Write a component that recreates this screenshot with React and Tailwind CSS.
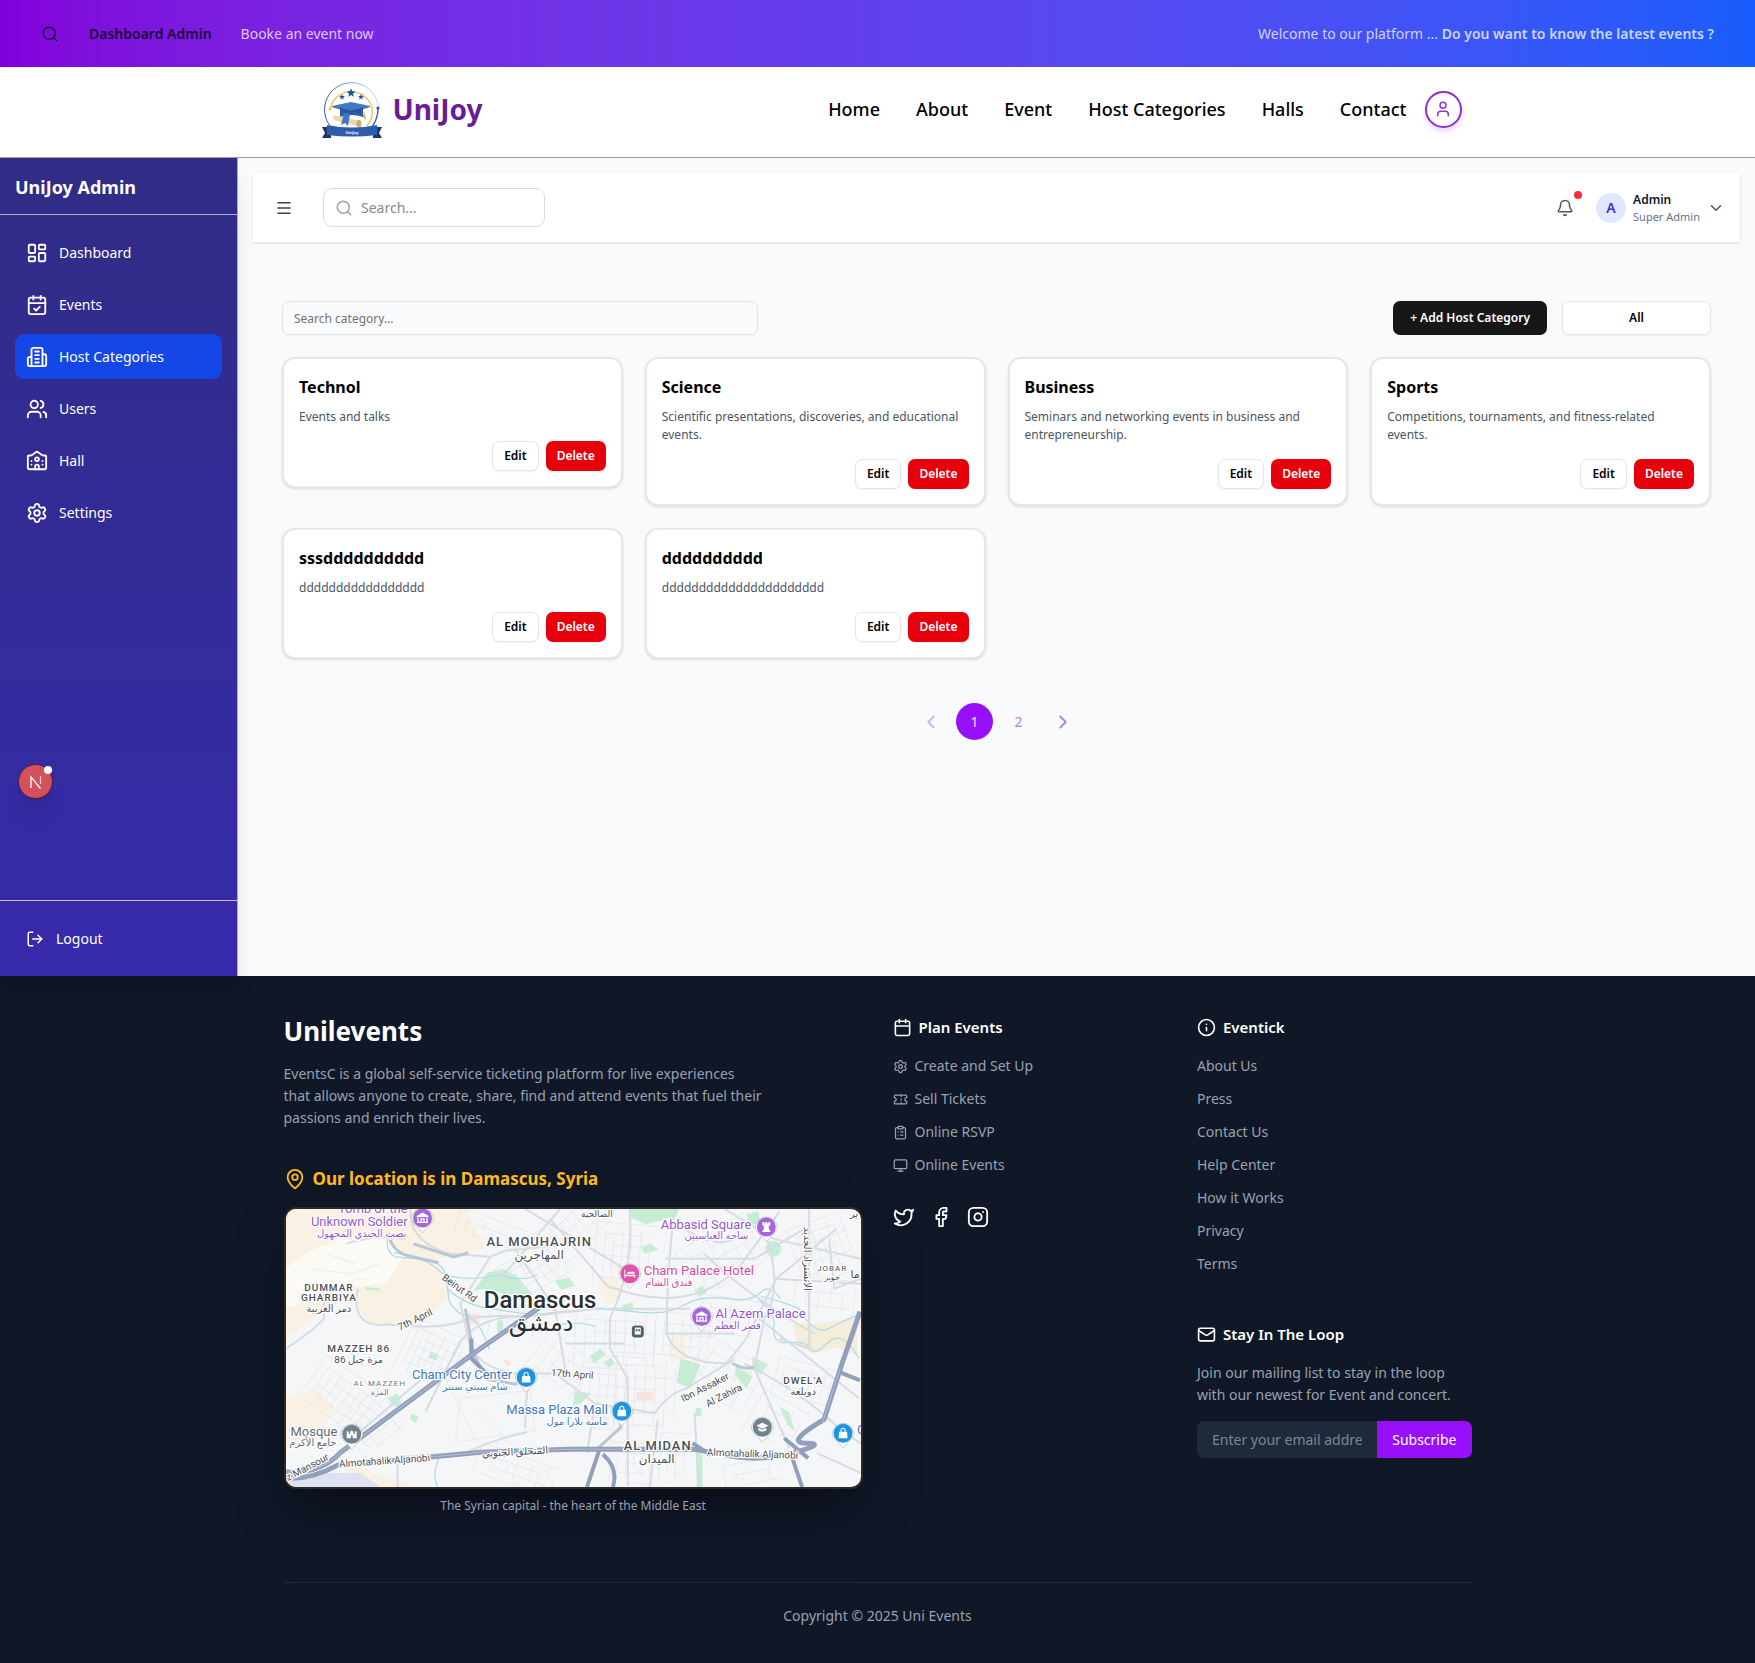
import React from "react";
import {
  Search, User, LayoutDashboard, CalendarCheck, Users, University, Settings, LogOut,
  Menu, Bell, ChevronDown, ChevronLeft, ChevronRight, MapPin, Calendar, Ticket,
  ClipboardList, Monitor, Twitter, Facebook, Instagram, Info, Mail,
} from "lucide-react";

function BuildingIcon({ size = 24, ...rest }) {
  return (
    <svg width={size} height={size} viewBox="0 0 24 24" fill="none" stroke="currentColor" strokeWidth="2" strokeLinecap="round" strokeLinejoin="round" aria-hidden="true" {...rest}>
      <path d="M6 22V4a2 2 0 0 1 2-2h8a2 2 0 0 1 2 2v18Z" />
      <path d="M6 12H4a2 2 0 0 0-2 2v6a2 2 0 0 0 2 2h2" />
      <path d="M18 9h2a2 2 0 0 1 2 2v9a2 2 0 0 1-2 2h-2" />
      <path d="M10 6h4M10 10h4M10 14h4M10 18h4" />
    </svg>
  );
}

function Star({ x, y, r }) {
  const pts = Array.from({ length: 10 }, (_, i) => {
    const a = (Math.PI / 5) * i - Math.PI / 2;
    const q = i % 2 ? r * 0.45 : r;
    return `${(x + q * Math.cos(a)).toFixed(2)},${(y + q * Math.sin(a)).toFixed(2)}`;
  }).join(" ");
  return <polygon points={pts} fill="#1c4f9c" />;
}

function Logo() {
  return (
    <svg width="60" height="60" viewBox="0 0 60 60" role="img" aria-label="UniJoy logo">
      <defs>
        <linearGradient id="ring" x1="0" y1="0" x2="1" y2="0">
          <stop offset="0" stopColor="#35599c" />
          <stop offset="0.55" stopColor="#8fb0d8" />
          <stop offset="1" stopColor="#c5dcf1" />
        </linearGradient>
      </defs>
      <path d="M8 47a27 27 0 1 1 43 0" fill="#fff" stroke="url(#ring)" strokeWidth="1" />
      <path d="M8 30a21.500 21.500 0 0 1 42 -1a21.500 21.500 0 0 1 -5 18" fill="none" stroke="#e9c35c" strokeWidth="1.4" />
      <circle cx="8" cy="30" r="1.5" fill="#e9c35c" />
      <path d="M56 29q0 10-6 19" fill="none" stroke="#2f5596" strokeWidth="1.2" />
      <circle cx="56" cy="29" r="1.600" fill="#2f5596" />
      <Star x={29} y={14} r={4.600} />
      <Star x={20} y={18} r={3} />
      <Star x={39} y={18} r={3} />
      <path d="M18 28h23v10q-11-4-23 0z" fill="#2c5ba6" />
      <path d="M10 27l19-4 19 4-19 5z" fill="#3f78c6" />
      <path d="M10 27l19 5 19-5v1l-19 5.500L10 28z" fill="#234c90" />
      <path d="M11 36l27 6 1 6-27-7z" fill="#e9d9ac" />
      <ellipse cx="37" cy="44.500" rx="2.500" ry="3.500" fill="#c9ac68" />
      <path d="M22 34l6 1-2 12-3-3-4 2z" fill="#3f78c6" />
      <path d="M42 32q1 4 2 9l-3-3z" fill="#d8a63c" />
      <path d="M0 48h9v11H0l3-5z M60 48h-9v11h9l-3-5z" fill="#1d3564" />
      <path d="M5 46q25 5 50 0v10q-25 3-50 0z" fill="#2c5cab" />
      <text x="30" y="54.500" fontSize="4" fontWeight="700" fill="#fff" textAnchor="middle" fontFamily="Noto Sans">UniJoy</text>
    </svg>
  );
}

const navLinks = ["Home", "About", "Event", "Host Categories", "Halls", "Contact"];

const sideLinks = [
  { label: "Dashboard", Icon: LayoutDashboard },
  { label: "Events", Icon: CalendarCheck },
  { label: "Host Categories", Icon: BuildingIcon, active: true },
  { label: "Users", Icon: Users },
  { label: "Hall", Icon: University },
  { label: "Settings", Icon: Settings },
];

const categories = [
  { name: "Technol", text: "Events and talks" },
  { name: "Science", text: "Scientific presentations, discoveries, and educational events." },
  { name: "Business", text: "Seminars and networking events in business and entrepreneurship." },
  { name: "Sports", text: "Competitions, tournaments, and fitness-related events." },
  { name: "sssdddddddddd", text: "ddddddddddddddddd" },
  { name: "dddddddddd", text: "dddddddddddddddddddddd" },
];

const planLinks = [
  { label: "Create and Set Up", Icon: Settings },
  { label: "Sell Tickets", Icon: Ticket },
  { label: "Online RSVP", Icon: ClipboardList },
  { label: "Online Events", Icon: Monitor },
];

const aboutLinks = ["About Us", "Press", "Contact Us", "Help Center", "How it Works", "Privacy", "Terms"];

function TopBar() {
  return (
    <div className="flex h-[67px] items-center justify-between bg-gradient-to-r from-[#8200db] to-[#155dfc] px-[41px] text-sm text-white/75">
      <div className="flex items-center">
        <button aria-label="Search" className="text-[#1d0a3a]"><Search size={18} /></button>
        <a href="#admin" className="ml-[30px] font-semibold text-[#1d0a3a]">Dashboard Admin</a>
        <a href="#book" className="ml-[29px]">Booke an event now</a>
      </div>
      <p>Welcome to our platform ... <strong className="font-semibold">Do you want to know the latest events ?</strong></p>
    </div>
  );
}

function Header() {
  return (
    <header className="border-b border-[#99a1af] bg-white">
      <div className="mx-auto flex h-[90px] max-w-[1168px] items-center justify-between pb-[6px] pl-[28px]">
        <a href="#home" className="flex items-center gap-[11px]">
          <Logo />
          <span className="text-[28px] font-bold text-[#6a1b9a]">UniJoy</span>
        </a>
        <nav className="flex items-center gap-[36px] text-[18px] font-medium text-black">
          {navLinks.map((l) => <a key={l} href="#nav">{l}</a>)}
          <button aria-label="Account" className="-ml-[18px] flex size-[37px] items-center justify-center rounded-full border-2 border-[#8b2fc9] text-[#9333cf] shadow-md shadow-purple-200">
            <User size={18} />
          </button>
        </nav>
      </div>
    </header>
  );
}

function Sidebar() {
  return (
    <aside className="relative z-10 flex w-[238px] shrink-0 flex-col border-r border-[#a9a7cf] bg-gradient-to-b from-[#312c85] to-[#372aac] text-white shadow-xl">
      <h2 className="flex h-[57px] items-center border-b border-[#b0aed3] px-[15px] pt-[2px] text-[18px] font-bold">UniJoy Admin</h2>
      <nav className="flex flex-1 flex-col gap-[7px] px-[15px] pt-[15px] text-sm">
        {sideLinks.map(({ label, Icon, active }) => (
          <a key={label} href="#side" className={`flex h-[45px] items-center gap-[11px] rounded-[9px] px-[11px] ${active ? "bg-[#1447e6]" : ""}`}>
            <Icon size={22} />
            {label}
          </a>
        ))}
      </nav>
      <div className="border-t border-[#c3c0e4] p-[15px]">
        <button className="flex h-[45px] items-center gap-[12px] px-[11px] text-sm"><LogOut size={18} />Logout</button>
      </div>
      <button aria-label="Open developer tools" className="absolute top-[606px] left-[18px] flex size-[35px] items-center justify-center rounded-full border border-[#4a1c3c] bg-[#d4505a] shadow-xl">
        <svg width="14" height="14" viewBox="0 0 14 14" fill="none" stroke="#fff" strokeWidth="1.300" aria-hidden="true">
          <path d="M2 13V2l9.500 11.500" />
          <path d="M11.500 1v8" strokeOpacity="0.7" />
        </svg>
        <span className="absolute top-[1px] right-0 size-[8px] rounded-full bg-white" />
      </button>
    </aside>
  );
}

function Toolbar() {
  return (
    <div className="flex h-[69px] items-center justify-between bg-white pr-[15px] pl-[22px] shadow-sm">
      <div className="flex items-center gap-[30px]">
        <button aria-label="Toggle menu" className="text-[#364153]"><Menu size={18} /></button>
        <label className="flex h-[39px] w-[222px] items-center gap-[8px] rounded-[9px] border border-[#d9dde3] px-[11px]">
          <Search size={18} className="shrink-0 text-[#99a1af]" />
          <input aria-label="Search" placeholder="Search..." className="w-full min-w-0 text-sm placeholder-[#85888e] outline-none" />
        </label>
      </div>
      <div className="flex items-center">
        <button aria-label="Notifications" className="relative mr-[22px] text-[#4a5565]">
          <Bell size={18} />
          <span className="absolute -top-[8px] -right-[8px] size-[8px] rounded-full bg-[#fb2c36]" />
        </button>
        <button className="flex items-center gap-[7px] text-left">
          <span className="flex size-[30px] items-center justify-center rounded-full bg-[#e0e7ff] text-sm font-semibold text-[#432dd7]">A</span>
          <span className="flex flex-col">
            <span className="text-[12px] leading-[18px] font-semibold text-[#101828]">Admin</span>
            <span className="text-[11px] leading-[15px] text-[#6a7282]">Super Admin</span>
          </span>
          <ChevronDown size={18} className="text-[#4a5565]" />
        </button>
      </div>
    </div>
  );
}

function CategoryCard({ name, text }) {
  return (
    <article className="rounded-[13px] border-2 border-[#e5e7eb] bg-white p-[15px] shadow-sm">
      <h3 className="text-[16px] leading-[26px] font-bold text-black">{name}</h3>
      <p className="mt-[8px] text-[12px] leading-[18px] text-[#4a5565]">{text}</p>
      <div className="mt-[15px] flex justify-end gap-[7px] text-[12px] font-semibold">
        <button className="h-[30px] rounded-[7px] border border-[#e5e5e5] bg-white px-[11px] text-black shadow-xs">Edit</button>
        <button className="h-[30px] rounded-[7px] bg-[#e7000b] px-[11px] text-white shadow-xs">Delete</button>
      </div>
    </article>
  );
}

function Main() {
  return (
    <main className="min-w-0 flex-1 bg-[#f9fafb] p-[15px]">
      <Toolbar />
      <section className="px-[29px] pt-[59px]">
        <div className="flex items-center justify-between">
          <input aria-label="Search category" placeholder="Search category..." className="h-[34px] w-1/3 rounded-[7px] border border-[#e3e4e8] px-[11px] text-[12px] shadow-xs placeholder-[#737373] outline-none" />
          <div className="flex gap-[15px] text-[12px] font-semibold">
            <button className="h-[34px] rounded-[7px] bg-[#171717] px-[17px] text-white">+ Add Host Category</button>
            <button className="h-[34px] w-[149px] rounded-[7px] border border-[#e5e5e5] bg-white text-black shadow-xs">All</button>
          </div>
        </div>
        <div className="mt-[22px] grid grid-cols-4 items-start gap-[22px]">
          {categories.map((c) => <CategoryCard key={c.name} {...c} />)}
        </div>
        <nav aria-label="Pagination" className="mt-[44px] flex justify-center gap-[7px] text-sm text-[#b57ee0]">
          <button aria-label="Previous page" className="flex size-[37px] items-center justify-center opacity-60"><ChevronLeft size={22} /></button>
          <button className="size-[37px] rounded-full bg-[#9810fa] text-white/85">1</button>
          <button className="size-[37px]">2</button>
          <button aria-label="Next page" className="flex size-[37px] items-center justify-center"><ChevronRight size={22} /></button>
        </nav>
      </section>
    </main>
  );
}

// Deterministic patches of small streets: [centre x, centre y, width, height, angle, spacing]
const streetPatches = [
  [150, 150, 70, 60, 25, 7], [60, 190, 80, 50, 35, 8], [90, 215, 60, 50, -40, 9],
  [290, 20, 90, 50, -45, 9], [340, 45, 60, 60, 5, 9], [330, 130, 80, 60, 3, 10],
  [320, 190, 50, 70, 5, 9], [360, 185, 60, 80, 3, 10], [440, 50, 80, 60, -30, 11],
  [450, 110, 70, 40, 8, 10], [540, 40, 60, 60, -20, 8], [440, 170, 70, 60, 30, 11],
  [400, 130, 60, 50, 4, 9], [350, 255, 50, 40, 3, 8], [390, 250, 30, 50, 3, 8],
  [230, 262, 80, 30, 20, 8], [520, 175, 60, 40, 15, 7], [490, 215, 50, 50, 30, 12],
  [250, 60, 70, 40, -30, 8], [230, 110, 50, 40, 10, 9], [470, 265, 60, 25, -10, 9],
  [540, 90, 60, 40, 5, 12], [275, 160, 60, 50, 38, 11], [205, 25, 70, 30, 20, 9],
];

function Patch({ p }) {
  const [cx, cy, w, h, a, s] = p;
  let d = "";
  for (let x = -w / 2, i = 0; x <= w / 2; x += s, i++) d += `M${x} ${-h / 2 + ((i * 7) % 15)}V${h / 2 - ((i * 11) % 17)}`;
  for (let y = -h / 2, i = 0; y <= h / 2; y += s + 2, i++) d += `M${-w / 2 + ((i * 9) % 20)} ${y}H${w / 2 - ((i * 13) % 23)}`;
  return <path d={d} transform={`translate(${cx} ${cy}) rotate(${a})`} />;
}

function Pin({ x, y, color, children }) {
  return (
    <g transform={`translate(${x} ${y})`}>
      <path d="M-11 1A11 11 0 1 1 11 1Q10 6 4 10L0 15-4 10Q-10 6-11 1z" fill="#fff" stroke="#b4b9c0" strokeWidth="0.7" />
      <circle r="9.500" fill={color} />
      <g fill="#fff">{children}</g>
    </g>
  );
}

const Museum = () => (
  <>
    <path d="M-6-2L0-5.500 6-2V-1H-6z" />
    <path d="M-4.500-.5V4M4.500-.5V4M-5.500 4.500H5.500M-1.500 4V1h3V4" fill="none" stroke="#fff" strokeWidth="1.300" />
  </>
);
const Bag = () => (
  <>
    <path d="M-4-1.500h8l.5 6.500h-9z" />
    <path d="M-2-1.500v-1.500a2 2 0 0 1 4 0v1.500" fill="none" stroke="#fff" strokeWidth="1.100" />
  </>
);

function L({ x, y, s = 13, c = "#4b4f55", r = 0, w = 400, a = "middle", children }) {
  return (
    <text x={x} y={y} fontSize={s} fill={c} fontWeight={w} textAnchor={a} transform={r ? `rotate(${r} ${x} ${y})` : undefined} stroke="#fff" strokeWidth="2.500" strokeLinejoin="round" paintOrder="stroke">
      {children}
    </text>
  );
}

function DamascusMap() {
  const P = "#9457cf";
  const B = "#3c78c0";
  return (
    <svg viewBox="0 0 577 279" className="block w-full" preserveAspectRatio="xMidYMid slice" role="img" aria-label="Map of Damascus" fontFamily='Roboto, "DejaVu Sans", sans-serif'>
      <rect width="577" height="279" fill="#f5f6f7" />
      <g fill="#f8f1e4">
        <path d="M0 0H180L200 40 150 50 165 85 130 120 85 115 60 85 0 130z" />
        <path d="M0 190l30-10 20 20-20 30-30 10z M60 255l30 10 40 14H70z" />
        <path d="M508 115l30 0 35-6v38l-20-8-25 6-14-8z" fill="#f6ecda" />
        <path d="M312 75l18-10 8 20-15 12z M383 128h18v22l-14 4z" />
      </g>
      <path d="M0 60q30-30 90-35l30 20-20 30-50 5-50 20z" fill="#fcfaf5" />
      <path d="M35 265l40 0 20 14H0v-10z" fill="#dce2f1" />
      <g fill="#c5edd3">
        <path d="M188 82l14-18 16-4 14 8 16 18-28 0-20-6z" />
        <path d="M345 0h50l-4 8-30 7-14-6z" />
        <path d="M396 150l20 6-10 24-14-6z M452 158l16 10-6 12-12-14z M468 148l16 8-8 10-8-8z" />
        <circle cx="489" cy="40" r="8" />
        <path d="M462 5l12-3 2 12-10 2z M270 72l14-3 6 8-14 4z M356 38l10-3 8 6-14 4z M305 148l10-8 6 6-12 9z M318 155l8-6 4 6-6 4z M290 183l16 2-10 10-8 2z M495 198l10 6 6 20-8-8z M102 190l10-5 4 10-6 4z M126 205l7 4-3 6-6-5z M212 112h6v12h-6z M411 200l6 0v8h-6z M412 245h6v34h-6z M145 143l8 3-2 6-8-3z M80 78l14 2v2l-14-1z M410 82l8-6 4 8-8 4z M338 96l10-2v8h-10z" />
      </g>
      <g fill="#fbe1d9"><path d="M352 184h16v8h-16z M180 105h14v10h-14z M218 150l8 4-4 4z" /></g>
      <g stroke="#e2e5ea" strokeWidth="0.7" fill="none">
        {streetPatches.map((p, i) => <Patch key={i} p={p} />)}
        <path d="M50 90l20-20 15 0 M25 60l40 5 30-10 M40 45l30 10 M175 190l70-8 5 40-80 12z M190 200l40 40 M160 170l30 60" />
      </g>
      <g fill="none" stroke="#abdbe3" strokeWidth="1.200">
        <path d="M102 28q-2 16 8 20l34 3q14 4 16 16t4 26q8 14 20 14 14 12 20 34" />
        <path d="M108 44q30 2 48 20 20 10 60 2 20 8 36 0" />
        <path d="M162 80q20 18 45 20 40 8 60 4l48-4 45 4q22 2 40-8t42-6 34-6 20 6" />
        <path d="M475 92q12 8 15 22-4 22 14 20t22 6 18-6 31 16 M477 88q20 4 38 12 16 28 30 20t30-14" />
        <path d="M152 279q-6-14 2-30" />
        <path d="M275 116q20-4 35 2" />
      </g>
      <path d="M103 24q2 20 24 24l26 6" fill="none" stroke="#b7c6da" strokeWidth="3" />
      <g fill="none" stroke="#d7dbe2" strokeWidth="2">
        <path d="M125 0q-2 34 40 45l40 3 14-6 60-6M205 48L175 95l10 45" />
        <path d="M60 35q30-10 60-5M72 80q-8 40 30 36 60 6 80-6 20-4 60-2l70-8" />
        <path d="M0 140q30-20 38-30l0-30" />
        <path d="M140 203l35-70q20-25 60-25M75 223l70-60" />
        <path d="M190 145q10 15 40 20h40l40 30 60 10q14-20 30-24l50-30M310 195l-8 50" />
        <path d="M215 70l60-70M230 40l40 60 10 60M265 10l60 70M240 0l100 60M345 0q4 60-20 110v30l18 30 0 108" />
        <path d="M325 100h80M280 135h60M325 78q80 30 130-20l40-55M390 0q-8 60-8 125 10 30 60 30l20-25 30-60 60-50" />
        <path d="M380 50h90l50-30M480 20q20 60 0 90l-10 50 35 80M490 70l87 5M525 0v140l-30-10" />
        <path d="M410 205l4 74M373 212l-8 67M440 0l50 30 87 20M380 125h70M475 110l100 80M420 45q40 40 110 80M460 155q60 30 100 70l17 10" />
        <path d="M112 279v-30l70-5q30-14 60-20M240 220q0-40 8-60M533 245l44 20" />
        <path d="M400 20q30 20 50 10M545 30l5 50 27-10" />
      </g>
      <g fill="none" stroke="#bcc5d2" strokeWidth="3">
        <path d="M128 35l40 13 15-4M188 145l-8-45M188 145l14 26 30 5M312 241l24-22v-20M448 155q10 6 22 4" />
      </g>
      <g fill="none" stroke="#929fbb" strokeWidth="6" strokeLinejoin="round">
        <path d="M0 264q35 2 55-20l133-99 66-46" strokeWidth="5" />
        <path d="M0 270q24 2 52-13l93-8 50-5 90-3 123 0 24 4q40 10 76 0t14-10 18-24l18-56 18-52" strokeWidth="5" />
        <path d="M314 243l-12 36M318 246q16 14 10 33M508 250l10 29M408 235l18 12M500 230l24 20M556 164l20 8" strokeWidth="4" />
        <path d="M186 130l0 20 14 14" strokeWidth="4" />
      </g>
      <g fill="none" stroke="#b3bed4" strokeWidth="1">
        <path d="M0 264q35 2 55-20l133-99 66-46M145 249l50-5 90-3 123 0M538 216l18-56" />
      </g>

      <L x={122} y={4} a="end" c={P}>Tomb of the</L>
      <L x={122} y={17} a="end" c={P}>Unknown Soldier</L>
      <L x={76} y={28} s={10} c={P}>نصب الجندي المجهول</L>
      <Pin x={137} y={9} color="#a566dc"><Museum /></Pin>
      <L x={312} y={8} s={9}>الصالحية</L>
      <L x={254} y={37} s={13} w={500}><tspan letterSpacing="1">AL MOUHAJRIN</tspan></L>
      <L x={254} y={50} s={12}>المهاجرين</L>
      <L x={467} y={20} a="end" c={P}>Abbasid Square</L>
      <L x={432} y={30} s={10} c={P}>ساحة العباسيين</L>
      <Pin x={482} y={18} color="#a566dc"><path d="M-4-5h2v1.500h1V-5h2v1.500h1V-5h2v3l-1.500 1v3l2 3h-9l2-3v-3l-1.500-1z" /></Pin>
      <L x={359} y={66} a="start" c="#d4499f">Cham Palace Hotel</L>
      <L x={384} y={77} s={10} c="#d4499f">فندق الشام</L>
      <Pin x={345} y={65} color="#e052ab"><path d="M-5.500-4h1v5h10v3h-1v-1.500h-9V4h-1zM-1-2h5q1 0 1 2h-6zM-2.500-1a1 1 0 1 1 0 .1" /></Pin>
      <L x={431} y={109} a="start" c={P}>Al Azem Palace</L>
      <L x={453} y={120} s={10} c={P}>قصر العظم</L>
      <Pin x={417} y={108} color="#a566dc"><Museum /></Pin>
      <L x={255} y={99} s={24} c="#2c2f33" w={500}>Damascus</L>
      <L x={256} y={122} s={24} c="#2c2f33">دمشق</L>
      <L x={43} y={82} s={10} w={500}><tspan letterSpacing="1">DUMMAR</tspan></L>
      <L x={43} y={92} s={10} w={500}><tspan letterSpacing="1">GHARBIYA</tspan></L>
      <L x={43} y={103} s={10}>دمر الغربية</L>
      <L x={172} y={82} s={10} r={36}>Beirut Rd</L>
      <L x={131} y={114} s={10} r={-26}>7th April</L>
      <L x={73} y={144} s={10} w={500}><tspan letterSpacing="1">MAZZEH 86</tspan></L>
      <L x={73} y={155} s={10}>مزة جبل 86</L>
      <L x={94} y={178} s={8} c="#6d7278"><tspan letterSpacing="1">AL MAZZEH</tspan></L>
      <L x={94} y={187} s={8} c="#6d7278">المزة</L>
      <L x={227} y={171} a="end" c={B}>Cham City Center</L>
      <L x={190} y={182} s={10} c={B}>شام سيتي سنتر</L>
      <Pin x={241} y={169} color="#1d93e3"><Bag /></Pin>
      <L x={287} y={169} s={10} r={4}>17th April</L>
      <L x={323} y={206} a="end" c={B}>Massa Plaza Mall</L>
      <L x={292} y={217} s={10} c={B}>ماسة بلازا مول</L>
      <Pin x={337} y={203} color="#1d93e3"><Bag /></Pin>
      <L x={28} y={228} c="#5f6973">Mosque</L>
      <L x={27} y={238} s={10} c="#5f6973">جامع الأكرم</L>
      <Pin x={66} y={226} color="#71848d"><path d="M-5 4v-6l1-1.500 1 1.500v2h1q0-3 2-4 2 1 2 4h1v-2l1-1.500 1 1.500v6h-4V2a1 1 0 0 0-2 0v2z" /></Pin>
      <L x={23} y={262} s={10} r={-28}>z Mansour</L>
      <L x={99} y={256} s={10} r={-4}>Almotahalik Aljanobi</L>
      <L x={230} y={247} s={10} r={-3}>المتحلق الجنوبي</L>
      <L x={373} y={242} s={13} w={500}><tspan letterSpacing="1">AL MIDAN</tspan></L>
      <L x={372} y={255} s={12}>الميدان</L>
      <L x={422} y={182} s={10} r={-27}>Ibn Assaker</L>
      <L x={441} y={190} s={10} r={-27}>Al Zahira</L>
      <L x={468} y={249} s={10} r={2}>Almotahalik Aljanobi</L>
      <L x={519} y={176} s={10} w={500}><tspan letterSpacing="1">DWEL'A</tspan></L>
      <L x={519} y={187} s={10}>دويلعة</L>
      <L x={548} y={62} s={8}><tspan letterSpacing="1">JOBAR</tspan></L>
      <L x={548} y={71} s={8}>جوبر</L>
      <L x={520} y={50} s={10} r={90}>الاتستراد الجديد</L>
      <L x={571} y={69} s={11}>ما</L>
      <L x={570} y={8} s={10}>ير</L>
      <Pin x={478} y={219} color="#71848d"><path d="M-6-1.500L0-4.500 6-1.500 0 1.500zM-4 .5L0 2.500 4 .5V3Q0 5.500-4 3z" /></Pin>
      <Pin x={559} y={225} color="#1d93e3"><Bag /></Pin>
      <L x={573} y={226} a="start" c={B}>C</L>
      <g transform="translate(353 123)">
        <rect x="-6.500" y="-6.500" width="13" height="13" rx="3.500" fill="#4e6069" stroke="#fff" />
        <path d="M-3-4h6v7h-6z" fill="#fff" />
        <path d="M-2-2.500h1.500V0H-2zM.5-2.500H2V0H.5z" fill="#4e6069" />
      </g>
    </svg>
  );
}

function FooterHeading({ Icon, children }) {
  return (
    <h3 className="flex items-center gap-[7px] text-[15px] leading-[26px] font-semibold text-white">
      <Icon size={19} />
      {children}
    </h3>
  );
}

function Footer() {
  return (
    <footer className="bg-[#101828] pt-[38px] pb-[37px] text-sm leading-[22px] text-[#99a1af]">
      <div className="mx-auto max-w-[1188px]">
        <div className="grid grid-cols-4 gap-[30px]">
          <div className="col-span-2">
            <h2 className="text-[26px] leading-[34px] font-bold text-white">Unilevents</h2>
            <p className="mt-[15px] max-w-[480px]">EventsC is a global self-service ticketing platform for live experiences that allows anyone to create, share, find and attend events that fuel their passions and enrich their lives.</p>
            <h3 className="mt-[37px] flex items-center gap-[7px] text-[17px] leading-[26px] font-bold text-[#ffb920]">
              <MapPin size={22} />
              Our location is in Damascus, Syria
            </h3>
            <div className="mt-[15px] overflow-hidden rounded-[12px] border-2 border-[#2f2923] shadow-2xl shadow-black/50">
              <DamascusMap />
            </div>
            <p className="mt-[8px] text-center text-[12px] leading-[18px]">The Syrian capital - the heart of the Middle East</p>
          </div>
          <div>
            <FooterHeading Icon={Calendar}>Plan Events</FooterHeading>
            <ul className="mt-[15px] flex flex-col gap-[11px]">
              {planLinks.map(({ label, Icon }) => (
                <li key={label}><a href="#plan" className="flex items-center gap-[7px]"><Icon size={15} />{label}</a></li>
              ))}
            </ul>
            <div className="mt-[30px] flex gap-[15px] text-white">
              <a href="#twitter" aria-label="Twitter"><Twitter size={22} /></a>
              <a href="#facebook" aria-label="Facebook"><Facebook size={22} /></a>
              <a href="#instagram" aria-label="Instagram"><Instagram size={22} /></a>
            </div>
          </div>
          <div>
            <FooterHeading Icon={Info}>Eventick</FooterHeading>
            <ul className="mt-[15px] flex flex-col gap-[11px]">
              {aboutLinks.map((l) => <li key={l}><a href="#about">{l}</a></li>)}
            </ul>
            <div className="mt-[46px]">
              <FooterHeading Icon={Mail}>Stay In The Loop</FooterHeading>
              <p className="mt-[15px]">Join our mailing list to stay in the loop with our newest for Event and concert.</p>
              <form className="mt-[15px] flex h-[37px]">
                <input type="email" aria-label="Email address" placeholder="Enter your email address" className="w-full min-w-0 flex-1 rounded-l-[7px] bg-[#1e2939] px-[15px] placeholder-[#7f858f] outline-none" />
                <button type="button" className="rounded-r-[7px] bg-[#9810fa] px-[15px] text-white">Subscribe</button>
              </form>
            </div>
          </div>
        </div>
        <p className="mt-[67px] border-t border-[#1e2939] pt-[22px] text-center">Copyright © 2025 Uni Events</p>
      </div>
    </footer>
  );
}

export default function App() {
  return (
    <div className="font-['Noto_Sans','Open_Sans',sans-serif]">
      <TopBar />
      <Header />
      <div className="flex min-h-[818px]">
        <Sidebar />
        <Main />
      </div>
      <Footer />
    </div>
  );
}
